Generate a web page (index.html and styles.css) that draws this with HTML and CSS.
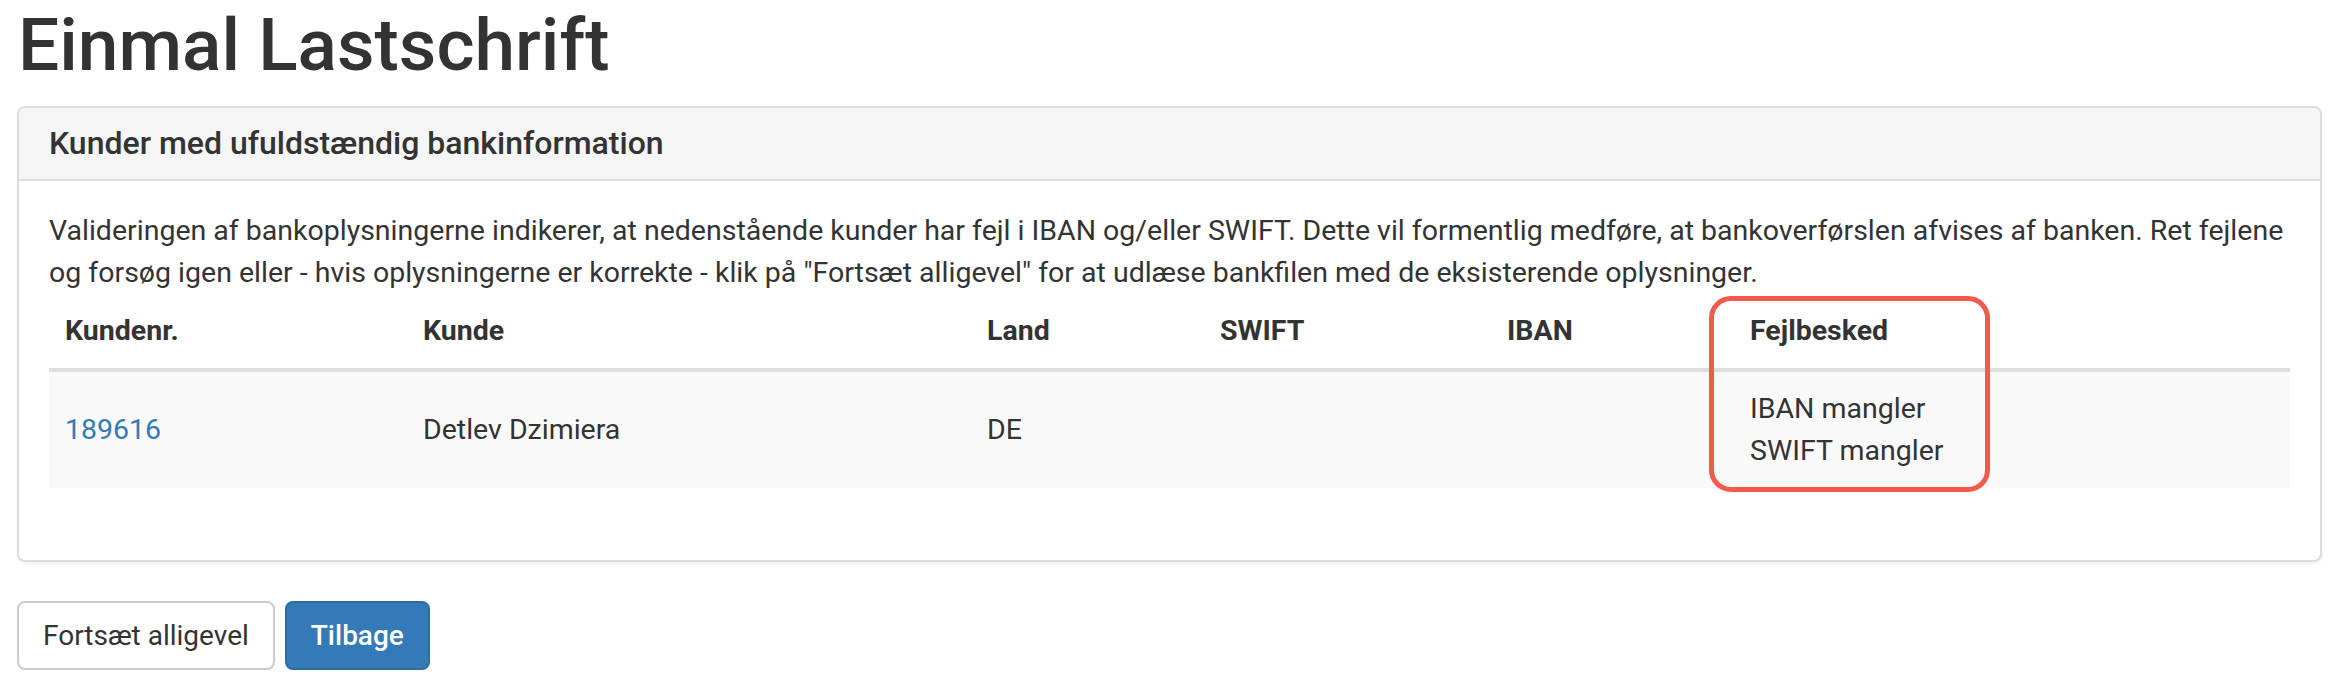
FILE: index.html
```html
<!DOCTYPE html>
<html lang="da">
<head>
<meta charset="utf-8">
<title>Einmal Lastschrift</title>
<link rel="stylesheet" href="styles.css">
</head>
<body>
<div class="page">
  <h1 class="title">Einmal Lastschrift</h1>
  <div class="panel">
    <div class="panel-heading">
      <h3 class="panel-title">Kunder med ufuldstændig bankinformation</h3>
    </div>
    <div class="panel-body">
      <p class="intro">Valideringen af bankoplysningerne indikerer, at nedenstående kunder har fejl i IBAN og/eller SWIFT. Dette vil formentlig medføre, at bankoverførslen afvises af banken. Ret fejlene og forsøg igen eller - hvis oplysningerne er korrekte - klik på "Fortsæt alligevel" for at udlæse bankfilen med de eksisterende oplysninger.</p>
      <table class="table">
        <thead>
          <tr>
            <th class="c-nr">Kundenr.</th>
            <th class="c-name">Kunde</th>
            <th class="c-land">Land</th>
            <th class="c-swift">SWIFT</th>
            <th class="c-iban">IBAN</th>
            <th class="c-err">Fejlbesked</th>
          </tr>
        </thead>
        <tbody>
          <tr>
            <td><a class="link" href="#">189616</a></td>
            <td>Detlev Dzimiera</td>
            <td>DE</td>
            <td></td>
            <td></td>
            <td>IBAN mangler<br>SWIFT mangler</td>
          </tr>
        </tbody>
      </table>
      <div class="highlight"></div>
    </div>
  </div>
  <div class="actions">
    <button class="btn btn-default">Fortsæt alligevel</button>
    <button class="btn btn-primary">Tilbage</button>
  </div>
</div>
</body>
</html>
```

FILE: styles.css
```css
html, body {
  margin: 0;
  padding: 0;
  background: #fff;
}
body {
  font-family: Roboto, "Helvetica Neue", Arial, sans-serif;
  font-size: 28.5px;
  line-height: 42px;
  color: #333;
}
.page {
  padding: 5px 10px 0 17px;
}
.title {
  font-size: 73px;
  font-weight: 500;
  line-height: 1.1;
  margin: 0 0 21px 1px;
  color: #333;
}
.panel {
  position: relative;
  border: 2px solid #ddd;
  border-radius: 8px;
  background: #fff;
  box-shadow: 0 2px 3px rgba(0,0,0,0.05);
  margin-bottom: 39px;
}
.panel-heading {
  background: #f5f5f5;
  border-bottom: 2px solid #ddd;
  border-radius: 6px 6px 0 0;
  padding: 17px 30px 18px;
}
.panel-title {
  margin: 0;
  font-size: 32px;
  font-weight: 500;
  line-height: 36px;
  color: #333;
}
.panel-body {
  position: relative;
  padding: 29px 30px 31px;
}
.intro {
  margin: 0;
}
.table {
  width: 100%;
  table-layout: fixed;
  border-collapse: collapse;
  border-spacing: 0;
  margin-bottom: 41px;
}
.table th {
  text-align: left;
  font-weight: 700;
  padding: 16px;
  border-bottom: 4px solid #ddd;
  vertical-align: bottom;
}
.table td {
  padding: 16px;
  vertical-align: middle;
  background: #f9f9f9;
}
.c-nr { width: 326px; }
.c-name { width: 532px; }
.c-land { width: 201px; }
.c-swift { width: 255px; }
.c-iban { width: 211px; }
.c-err { width: auto; }
.link {
  color: #337ab7;
  text-decoration: none;
}
.highlight {
  position: absolute;
  left: 1690px;
  top: 115px;
  width: 271px;
  height: 186px;
  border: 5px solid #f25a4d;
  border-radius: 22px;
  pointer-events: none;
}
.actions {
  display: flex;
  gap: 10px;
}
.btn {
  font-family: inherit;
  font-size: 28px;
  line-height: 41px;
  padding: 12px 24px;
  border: 2px solid #ccc;
  border-radius: 8px;
  background: #fff;
  color: #333;
  cursor: pointer;
}
.btn-primary {
  background: #337ab7;
  border-color: #2e6da4;
  color: #fff;
  font-weight: 500;
}
```
